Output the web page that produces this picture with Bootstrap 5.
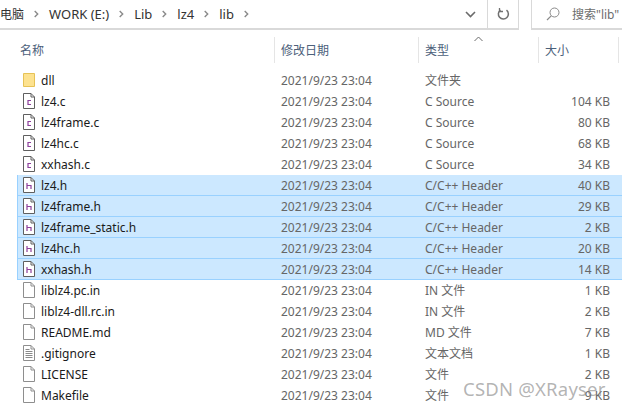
<!DOCTYPE html>
<html lang="zh"><head><meta charset="utf-8"><title>lib</title>
<link href="https://cdn.jsdelivr.net/npm/bootstrap@5.3.0/dist/css/bootstrap.min.css" rel="stylesheet">
<style>
html,body{margin:0;height:409px;overflow:hidden;background:#fff}
body{font:12px/21px "Noto Sans","Noto Sans CJK SC",sans-serif;color:#1a1a1a;position:relative}
.topbar{height:30px;gap:12px}
.addr{width:519px;height:30px;border:solid #d9d9d9;border-width:0 1px 2px 0;line-height:27px;font-size:13px;color:#333}
.crumb{gap:10px}
.cjk12{font-size:12px}
.chev{width:5px;height:8px;flex:none}
.addr-drop{width:34px;height:28px}
.refresh{width:31px;height:28px;border-left:1px solid #d9d9d9}
.finder{flex:1;height:30px;border:solid #d9d9d9;border-width:0 0 2px 1px;color:#6d6d6d;padding-left:14px;gap:12px;line-height:27px;white-space:nowrap;overflow:hidden}
.headrow{height:26px;margin-top:7px;padding-left:1px;color:#4c607a;line-height:28px;position:relative}
.hc{border-right:1px solid #e5e5e5;flex:none;height:26px}
.hname{width:274px;padding-left:19px}
.hdate{width:144px;padding-left:6px}
.htype{width:120px;padding-left:6px}
.hsize{width:80px;padding-left:6px}
.sortmark{position:absolute;left:474px;top:-1px;width:9px;height:6px}
.filelist{margin-top:7px;padding-left:17px}
.frow{height:21px;line-height:22px;border:1px solid transparent;border-width:0 0 1px 1px;color:#666}
.frow.picked{background:#cce8ff;border-color:#99d1ff}
.ficon{width:23px;flex:none;padding-left:4px;display:flex;align-items:center}
.ficon svg{width:14px;height:16px}
.fname{width:240px;flex:none;color:#1a1a1a}
.fdate{width:144px;flex:none}
.ftype{width:120px;flex:none}
.fsize{width:65px;flex:none;text-align:right}
.stamp{position:absolute;left:463px;top:376px;font:18.500px/26px "Noto Sans",sans-serif;color:rgba(130,130,130,.6);letter-spacing:.2px}
</style></head><body>
<svg width="0" height="0" class="d-block position-absolute">
<defs>
<symbol id="pg" viewBox="0 0 14 16"><path d="M1.500.5h7.500l3.500 3.500v11.500h-11z" fill="#fff" stroke="#8e8e8e"/><path d="M9 .5v3.500h3.500" fill="none" stroke="#8e8e8e"/></symbol>
<symbol id="pgc" viewBox="0 0 14 16"><path d="M1.500.5h7.500l3.500 3.500v11.500h-11z" fill="#fff" stroke="#5f5f5f"/><path d="M9 .5v3.500h3.500" fill="none" stroke="#5f5f5f"/><path d="M9 7.500H6v4h3" fill="none" stroke="#8d3f9c" stroke-width="1.200"/></symbol>
<symbol id="pgh" viewBox="0 0 14 16"><path d="M1.500.5h7.500l3.500 3.500v11.500h-11z" fill="#fff" stroke="#5f5f5f"/><path d="M9 .5v3.500h3.500" fill="none" stroke="#5f5f5f"/><path d="M5 6v6M5 8.500h4V12" fill="none" stroke="#8d3f9c" stroke-width="1.200"/></symbol>
<symbol id="pgt" viewBox="0 0 14 16"><path d="M1.500.5h7.500l3.500 3.500v11.500h-11z" fill="#fff" stroke="#8e8e8e"/><path d="M9 .5v3.500h3.500" fill="none" stroke="#8e8e8e"/><path d="M3.500 4.500h4M3.500 6.500h7M3.500 8.500h7M3.500 10.500h7M3.500 12.500h7" stroke="#8a8a8a"/></symbol>
<symbol id="dir" viewBox="0 0 14 16"><path d="M1.500 1.500h11v13h-11z" fill="#fde28f" stroke="#e6c256"/></symbol>
<symbol id="arr" viewBox="0 0 5 8"><path d="M.7 1l3 3-3 3" fill="none" stroke="#8a8a8a" stroke-width="1.400"/></symbol>
</defs></svg>

<div class="d-flex topbar">
 <div class="addr d-flex justify-content-between">
  <div class="d-flex align-items-center crumb">
   <span class="cjk12">电脑</span><svg class="chev"><use href="#arr"/></svg>
   <span>WORK (E:)</span><svg class="chev"><use href="#arr"/></svg>
   <span>Lib</span><svg class="chev"><use href="#arr"/></svg>
   <span>lz4</span><svg class="chev"><use href="#arr"/></svg>
   <span>lib</span><svg class="chev"><use href="#arr"/></svg>
  </div>
  <div class="d-flex">
   <div class="addr-drop d-flex align-items-center justify-content-center"><svg width="11" height="7" viewBox="0 0 11 7"><path d="M1 1l4.500 4.500L10 1" fill="none" stroke="#6b6b6b" stroke-width="1.600"/></svg></div>
   <div class="refresh d-flex align-items-center justify-content-center"><svg width="13" height="14" viewBox="0 0 13 14"><path d="M9.500 3.200A5 5 0 1 1 3.500 3" fill="none" stroke="#707070" stroke-width="1.500"/><path d="M2.500 1v3.500H6" fill="none" stroke="#707070" stroke-width="1.300"/></svg></div>
  </div>
 </div>
 <div class="finder d-flex align-items-center">
  <svg width="14" height="14" viewBox="0 0 14 14" class="flex-none"><circle cx="8.500" cy="5.500" r="4.500" fill="none" stroke="#8a8a8a"/><path d="M5.200 8.800L1 13" stroke="#8a8a8a" stroke-width="1.200"/></svg>
  <span>搜索"lib"</span>
 </div>
</div>

<div class="d-flex headrow">
 <div class="hc hname">名称</div><div class="hc hdate">修改日期</div><div class="hc htype">类型</div><div class="hc hsize">大小</div>
 <svg class="sortmark" viewBox="0 0 9 6"><path d="M.5 5L4.500 1l4 4" fill="none" stroke="#6b6b6b"/></svg>
</div>

<div class="filelist">
 <div class="d-flex frow"><span class="ficon"><svg><use href="#dir"/></svg></span><span class="fname">dll</span><span class="fdate">2021/9/23 23:04</span><span class="ftype">文件夹</span><span class="fsize"></span></div>
 <div class="d-flex frow"><span class="ficon"><svg><use href="#pgc"/></svg></span><span class="fname">lz4.c</span><span class="fdate">2021/9/23 23:04</span><span class="ftype">C Source</span><span class="fsize">104 KB</span></div>
 <div class="d-flex frow"><span class="ficon"><svg><use href="#pgc"/></svg></span><span class="fname">lz4frame.c</span><span class="fdate">2021/9/23 23:04</span><span class="ftype">C Source</span><span class="fsize">80 KB</span></div>
 <div class="d-flex frow"><span class="ficon"><svg><use href="#pgc"/></svg></span><span class="fname">lz4hc.c</span><span class="fdate">2021/9/23 23:04</span><span class="ftype">C Source</span><span class="fsize">68 KB</span></div>
 <div class="d-flex frow"><span class="ficon"><svg><use href="#pgc"/></svg></span><span class="fname">xxhash.c</span><span class="fdate">2021/9/23 23:04</span><span class="ftype">C Source</span><span class="fsize">34 KB</span></div>
 <div class="d-flex frow picked"><span class="ficon"><svg><use href="#pgh"/></svg></span><span class="fname">lz4.h</span><span class="fdate">2021/9/23 23:04</span><span class="ftype">C/C++ Header</span><span class="fsize">40 KB</span></div>
 <div class="d-flex frow picked"><span class="ficon"><svg><use href="#pgh"/></svg></span><span class="fname">lz4frame.h</span><span class="fdate">2021/9/23 23:04</span><span class="ftype">C/C++ Header</span><span class="fsize">29 KB</span></div>
 <div class="d-flex frow picked"><span class="ficon"><svg><use href="#pgh"/></svg></span><span class="fname">lz4frame_static.h</span><span class="fdate">2021/9/23 23:04</span><span class="ftype">C/C++ Header</span><span class="fsize">2 KB</span></div>
 <div class="d-flex frow picked"><span class="ficon"><svg><use href="#pgh"/></svg></span><span class="fname">lz4hc.h</span><span class="fdate">2021/9/23 23:04</span><span class="ftype">C/C++ Header</span><span class="fsize">20 KB</span></div>
 <div class="d-flex frow picked"><span class="ficon"><svg><use href="#pgh"/></svg></span><span class="fname">xxhash.h</span><span class="fdate">2021/9/23 23:04</span><span class="ftype">C/C++ Header</span><span class="fsize">14 KB</span></div>
 <div class="d-flex frow"><span class="ficon"><svg><use href="#pg"/></svg></span><span class="fname">liblz4.pc.in</span><span class="fdate">2021/9/23 23:04</span><span class="ftype">IN 文件</span><span class="fsize">1 KB</span></div>
 <div class="d-flex frow"><span class="ficon"><svg><use href="#pg"/></svg></span><span class="fname">liblz4-dll.rc.in</span><span class="fdate">2021/9/23 23:04</span><span class="ftype">IN 文件</span><span class="fsize">2 KB</span></div>
 <div class="d-flex frow"><span class="ficon"><svg><use href="#pg"/></svg></span><span class="fname">README.md</span><span class="fdate">2021/9/23 23:04</span><span class="ftype">MD 文件</span><span class="fsize">7 KB</span></div>
 <div class="d-flex frow"><span class="ficon"><svg><use href="#pgt"/></svg></span><span class="fname">.gitignore</span><span class="fdate">2021/9/23 23:04</span><span class="ftype">文本文档</span><span class="fsize">1 KB</span></div>
 <div class="d-flex frow"><span class="ficon"><svg><use href="#pg"/></svg></span><span class="fname">LICENSE</span><span class="fdate">2021/9/23 23:04</span><span class="ftype">文件</span><span class="fsize">2 KB</span></div>
 <div class="d-flex frow"><span class="ficon"><svg><use href="#pg"/></svg></span><span class="fname">Makefile</span><span class="fdate">2021/9/23 23:04</span><span class="ftype">文件</span><span class="fsize">9 KB</span></div>
</div>
<div class="stamp">CSDN @XRayser</div>
</body></html>
